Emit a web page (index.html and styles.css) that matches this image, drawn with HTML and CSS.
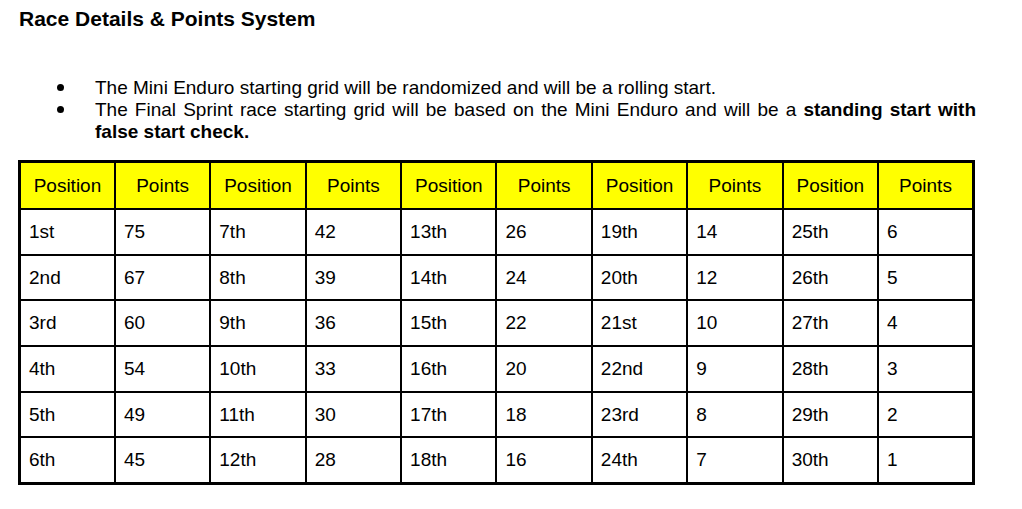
FILE: index.html
```html
<!DOCTYPE html>
<html>
<head>
<meta charset="utf-8">
<link rel="stylesheet" href="styles.css">
</head>
<body>
<div class="page">
  <h1 class="title">Race Details &amp; Points System</h1>
  <ul class="notes">
    <li>The Mini Enduro starting grid will be randomized and will be a rolling start.</li>
    <li>The Final Sprint race starting grid will be based on the Mini Enduro and will be a <b>standing start with</b> <b>false start check.</b></li>
  </ul>
  <table class="points">
    <thead>
      <tr><th>Position</th><th>Points</th><th>Position</th><th>Points</th><th>Position</th><th>Points</th><th>Position</th><th>Points</th><th>Position</th><th>Points</th></tr>
    </thead>
    <tbody>
      <tr><td>1st</td><td>75</td><td>7th</td><td>42</td><td>13th</td><td>26</td><td>19th</td><td>14</td><td>25th</td><td>6</td></tr>
      <tr><td>2nd</td><td>67</td><td>8th</td><td>39</td><td>14th</td><td>24</td><td>20th</td><td>12</td><td>26th</td><td>5</td></tr>
      <tr><td>3rd</td><td>60</td><td>9th</td><td>36</td><td>15th</td><td>22</td><td>21st</td><td>10</td><td>27th</td><td>4</td></tr>
      <tr><td>4th</td><td>54</td><td>10th</td><td>33</td><td>16th</td><td>20</td><td>22nd</td><td>9</td><td>28th</td><td>3</td></tr>
      <tr><td>5th</td><td>49</td><td>11th</td><td>30</td><td>17th</td><td>18</td><td>23rd</td><td>8</td><td>29th</td><td>2</td></tr>
      <tr><td>6th</td><td>45</td><td>12th</td><td>28</td><td>18th</td><td>16</td><td>24th</td><td>7</td><td>30th</td><td>1</td></tr>
    </tbody>
  </table>
</div>
</body>
</html>
```
FILE: styles.css
```css
html, body {
  margin: 0;
  padding: 0;
  background: #ffffff;
}
.page {
  font-family: "Liberation Sans", Arial, sans-serif;
  color: #000000;
  padding: 7px 0 0 19px;
  width: 957px;
}
.title {
  font-size: 21px;
  font-weight: bold;
  margin: 0;
  line-height: 24px;
}
.notes {
  list-style: none;
  margin: 45.5px 0 0 0;
  padding: 0 0 0 76px;
  font-size: 19px;
  line-height: 22px;
}
.notes li {
  position: relative;
  text-align: justify;
}
.notes li::before {
  content: "";
  position: absolute;
  left: -38px;
  top: 7px;
  width: 7px;
  height: 7px;
  border-radius: 50%;
  background: #000000;
}
.points {
  margin-top: 17.5px;
  margin-left: -1px;
  border-collapse: collapse;
  border: 3px solid #000000;
  width: 957px;
  table-layout: fixed;
  font-size: 19px;
}
.points th,
.points td {
  border: 2.5px solid #000000;
  height: 43.7px;
  padding: 0 8px;
}
.points th {
  background: #ffff00;
  font-weight: normal;
  text-align: center;
  height: 45px;
}
.points td {
  text-align: left;
}
```
